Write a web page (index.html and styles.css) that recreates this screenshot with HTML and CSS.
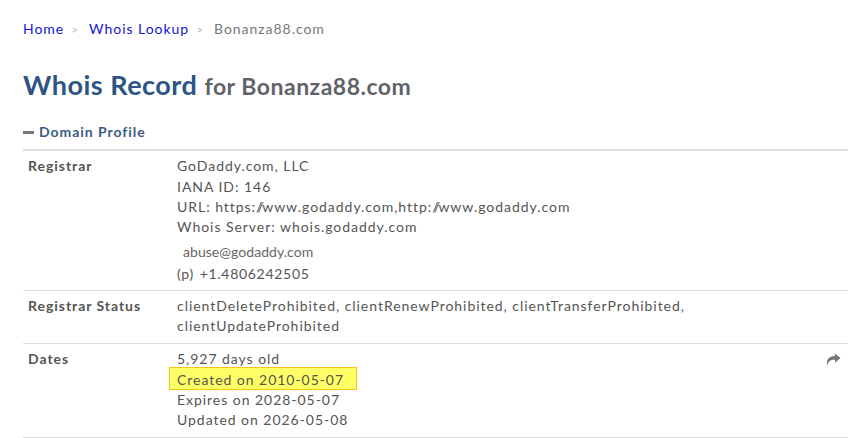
FILE: index.html
```html
<!DOCTYPE html>
<html>
<head>
<title>Whois Record for Bonanza88.com</title>
<link rel="stylesheet" href="styles.css">
</head>
<body>
<ul class="crumbs">
  <li><a href="#">Home</a></li>
  <li><a href="#">Whois Lookup</a></li>
  <li class="current">Bonanza88.com</li>
</ul>

<h1>Whois Record <small>for Bonanza88.com</small></h1>

<h2 class="section"><span class="dash"></span>Domain Profile</h2>

<div class="row">
  <div class="label">Registrar</div>
  <div class="value">
    <div>GoDaddy.com, LLC</div>
    <div>IANA ID: 146</div>
    <div>URL: https:<span class="slashes">//</span>www.godaddy.com,http:<span class="slashes">//</span>www.godaddy.com</div>
    <div>Whois Server: whois.godaddy.com</div>
    <div class="email">abuse@godaddy.com</div>
    <div class="phone">(p) +1.4806242505</div>
  </div>
</div>

<div class="row">
  <div class="label">Registrar Status</div>
  <div class="value">clientDeleteProhibited, clientRenewProhibited, clientTransferProhibited, clientUpdateProhibited</div>
</div>

<div class="row last">
  <div class="label">Dates</div>
  <div class="value">
    <div>5,927 days old</div>
    <div><span class="marked">Created on 2010-05-07</span></div>
    <div>Expires on 2028-05-07</div>
    <div>Updated on 2026-05-08</div>
  </div>
  <svg class="share" viewBox="0 0 14 12" width="15" height="13"><path d="M8.4 0.3 13.6 4.6 8.4 9V6.2C5 6 2.4 6.8 1 11.6 0.2 6.4 2.6 2.8 8.4 2.8Z"/></svg>
</div>
</body>
</html>
```

FILE: styles.css
```css
body {
  margin: 0;
  padding: 0 9px 0 23px;
  background: #fff;
  color: #555;
  font-family: "Lato", sans-serif;
  font-size: 14px;
  line-height: 20.3px;
  letter-spacing: .96px;
}

.crumbs {
  display: flex;
  list-style: none;
  margin: 0;
  padding: 19px 0 0;
}
.crumbs li { color: #777; }
.crumbs a { color: #1414d2; text-decoration: none; }
.crumbs li + li:before {
  content: ">";
  color: #bbb;
  font-size: 12px;
  margin: 0 10px 0 7px;
}

h1 {
  margin: 28px 0 0;
  color: #2d5484;
  font-size: 27px;
  line-height: 34px;
  font-weight: 700;
  letter-spacing: .5px;
}
h1 small {
  color: #5f6368;
  font-size: 23px;
}

.section {
  display: flex;
  align-items: center;
  margin: 19px 0 0;
  padding-bottom: 7px;
  border-bottom: 2px solid #ddd;
  color: #3d5a80;
  font-size: 14px;
  line-height: 20px;
  font-weight: 700;
}
.dash {
  width: 11px;
  height: 3px;
  margin-right: 5px;
  background: #777;
}

.row {
  position: relative;
  display: flex;
  padding: 5px 0 7px 5px;
  border-bottom: 1px solid #ddd;
}
.last { padding-bottom: 6px; }
.label {
  flex: 0 0 149px;
  font-weight: 700;
}
.value { flex: 1; padding-right: 150px; }

.slashes { letter-spacing: -1.7px; }

.email {
  margin: 5px 0 0 6px;
  color: #666;
  letter-spacing: .05px;
  line-height: 20px;
}
.phone {
  margin: 2px 0 -2px;
  letter-spacing: .7px;
  word-spacing: 1.5px;
}

.marked {
  margin-left: -8px;
  padding: 3px 12px 1px 7px;
  background: #ffff66;
  border: 1px solid #f5c518;
}

.share {
  position: absolute;
  top: 9px;
  right: 7px;
  fill: #777;
}
```
